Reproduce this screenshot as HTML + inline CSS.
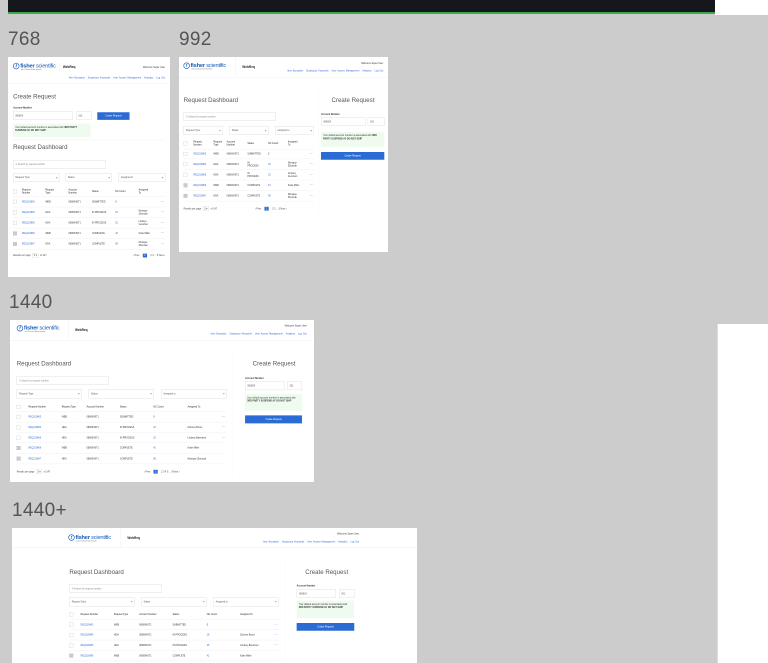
<!DOCTYPE html>
<html><head><meta charset="utf-8">
<style>
*{margin:0;padding:0;box-sizing:border-box}
body{width:768px;height:663px;background:#cccccc;position:relative;overflow:hidden;font-family:"Liberation Sans",sans-serif}
.lbl{position:absolute;font-size:19px;color:#555;letter-spacing:.3px}
.b{position:absolute;background:#fff;overflow:hidden}
.in{position:absolute;left:0;top:0;transform-origin:0 0;transform:scale(.211);font-size:11px;color:#333}
.a{position:absolute;white-space:nowrap}
.logo{position:absolute;height:40px;width:210px}
.logo .c{position:absolute;left:0;top:2px;width:30px;height:30px;border:3px solid #1a5bb8;border-radius:50%;color:#1a5bb8;font-weight:bold;font-size:20px;text-align:center;line-height:24px;font-style:italic}
.logo .t{position:absolute;left:34px;top:0;font-size:27px;color:#1a5bb8;letter-spacing:-1px}
.logo .t b{font-weight:bold}
.logo .s{position:absolute;left:38px;top:30px;font-size:7px;color:#666}
.vd{position:absolute;width:1px;background:#ddd}
.wr{font-weight:bold;font-size:15px;color:#222}
.nav{color:#2b6cd4;font-size:11px;word-spacing:2px}
.nav span{margin-left:14px}
.hr{position:absolute;left:0;right:0;height:2px;background:#eee}
.ttl{font-size:29px;color:#555;font-weight:300}
.bx{position:absolute;border:1px solid #bbb;background:#fff;font-size:11px;color:#555;padding:0 10px;display:flex;align-items:center;justify-content:space-between}
.btn{position:absolute;background:#2b6cd4;color:#fff;font-size:11px;display:flex;align-items:center;justify-content:center;border-radius:2px}
.note{position:absolute;background:#eefbee;font-size:11px;color:#333;padding:10px;line-height:15px;white-space:normal}
.row{position:absolute;display:grid;align-items:center;border-bottom:2px solid #eee;font-size:11px;line-height:14px}
.row.h{font-size:11px;color:#222}
.cb{width:18px;height:18px;border:1px solid #aaa;background:#fff}
.cb.g{background:#ccc}
.lk{color:#2b6cd4}
.dt{color:#2b6cd4;font-size:16px;letter-spacing:1px}
.pg{position:absolute;display:flex;align-items:center;gap:16px;font-size:11px;color:#444}
.pg .on{background:#2b6cd4;color:#fff;padding:3px 7px}
.sel{border:1px solid #bbb;padding:3px 6px}
</style></head><body>

<div style="position:absolute;left:8px;top:0;width:707px;height:12px;background:#16161d"></div>
<div style="position:absolute;left:8px;top:12px;width:707px;height:2px;background:#3ca94a"></div>
<div style="position:absolute;left:715px;top:0;width:53px;height:15px;background:#fff"></div>

<div class="lbl" style="left:8px;top:29px">768</div>
<div class="lbl" style="left:179px;top:29px">992</div>
<div class="lbl" style="left:9px;top:292px">1440</div>
<div class="lbl" style="left:12px;top:500px">1440+</div>

<!-- 768 -->
<div class="b" style="left:8px;top:57px;width:162px;height:220px">
<div class="in" style="width:768px;height:1043px">
 <div class="logo" style="left:24px;top:26px"><div class="c">f</div><div class="t"><b>fisher</b> scientific</div><div class="s">part of Thermo Fisher Scientific</div></div>
 <div class="vd" style="left:243px;top:30px;height:40px"></div>
 <div class="a wr" style="left:260px;top:40px">WebReq</div>
 <div class="a" style="right:24px;top:44px">Welcome Super User</div>
 <div class="a nav" style="right:24px;top:94px">Item Exception<span>Suspicious Keywords</span><span>User Access Management</span><span>Analytics</span><span>Log Out</span></div>
 <div class="hr" style="top:123px"></div>
 <div class="a ttl" style="left:24px;top:172px">Create Request</div>
 <div class="a" style="left:24px;top:234px;font-weight:bold">Account Number</div>
 <div class="bx" style="left:24px;top:259px;width:284px;height:38px">080824</div>
 <div class="bx" style="left:324px;top:259px;width:71px;height:38px">001</div>
 <div class="btn" style="left:423px;top:262px;width:153px;height:36px">Create Request</div>
 <div class="note" style="left:24px;top:316px;width:367px;height:63px">Your default account number is associated with <b>3RD PARTY SUSPEND AF DO NOT SHIP</b></div>
 <div class="hr" style="top:392px;left:24px;right:24px"></div>
 <div class="a ttl" style="left:24px;top:410px">Request Dashboard</div>
 <div class="bx" style="left:24px;top:489px;width:439px;height:41px;justify-content:flex-start;color:#888">⚲ Search by request number</div>
 <div class="bx" style="left:24px;top:551px;width:221px;height:40px">Request Type <span>▾</span></div>
 <div class="bx" style="left:273px;top:551px;width:220px;height:40px">Status <span>▾</span></div>
 <div class="bx" style="left:524px;top:551px;width:221px;height:40px">Assigned to <span>▾</span></div>
 <div style="position:absolute;left:24px;top:614px;width:721px;--g:42px 111px 110px 111px 110px 111px 104px 1fr">
  <div class="row h" style="position:relative;grid-template-columns:var(--g);height:48px"><div class="cb"></div><div>Request<br>Number</div><div>Request<br>Type</div><div>Account<br>Number</div><div>Status</div><div>NC Count</div><div>Assigned<br>To</div><div></div></div>
  <div class="row" style="position:relative;grid-template-columns:var(--g);height:50px"><div class="cb"></div><div class="lk">REQ219863</div><div>WEB</div><div>0808S4ST1</div><div>SUBMITTED</div><div>0</div><div></div><div class="dt">···</div></div>
  <div class="row" style="position:relative;grid-template-columns:var(--g);height:50px"><div class="cb"></div><div class="lk">REQ219864</div><div>HDA</div><div>0808S4ST1</div><div>IN PROCESS</div><div class="lk">18</div><div>Monique<br>Zboncak</div><div class="dt">···</div></div>
  <div class="row" style="position:relative;grid-template-columns:var(--g);height:50px"><div class="cb"></div><div class="lk">REQ219865</div><div>HDA</div><div>0808S4ST1</div><div>IN PROCESS</div><div class="lk">25</div><div>Lindsey<br>Gocohen</div><div class="dt">···</div></div>
  <div class="row" style="position:relative;grid-template-columns:var(--g);height:50px"><div class="cb g"></div><div class="lk">REQ219866</div><div>WEB</div><div>0808S4ST1</div><div>COMPLETE</div><div class="lk">42</div><div>Katie Miller</div><div class="dt">···</div></div>
  <div class="row" style="position:relative;grid-template-columns:var(--g);height:50px"><div class="cb g"></div><div class="lk">REQ219867</div><div>HDA</div><div>0808S4ST1</div><div>COMPLETE</div><div class="lk">58</div><div>Monique<br>Zboncak</div><div class="dt">···</div></div>
 </div>
 <div class="pg" style="left:24px;top:930px;gap:8px">Results per page <span class="sel">5 ▾</span> of 147</div>
 <div class="pg" style="right:24px;top:932px">‹ Prev <span class="on">1</span>2 3 ... 5 Next ›</div>
</div></div>

<!-- 992 -->
<div class="b" style="left:179px;top:57px;width:209px;height:195px">
<div class="in" style="width:992px;height:924px">
 <div class="logo" style="left:21px;top:24px"><div class="c">f</div><div class="t"><b>fisher</b> scientific</div><div class="s">part of Thermo Fisher Scientific</div></div>
 <div class="vd" style="left:268px;top:0;height:95px"></div>
 <div class="a wr" style="left:300px;top:40px">WebReq</div>
 <div class="a" style="right:24px;top:24px">Welcome Super User</div>
 <div class="a nav" style="right:24px;top:60px">Item Exception<span>Suspicious Keywords</span><span>User Access Management</span><span>Analytics</span><span>Log Out</span></div>
 <div class="hr" style="top:95px"></div>
 <div class="a ttl" style="left:22px;top:188px">Request Dashboard</div>
 <div class="bx" style="left:22px;top:264px;width:437px;height:38px;justify-content:flex-start;color:#888">⚲ Search by request number</div>
 <div class="bx" style="left:22px;top:328px;width:185px;height:40px">Request Type <span>▾</span></div>
 <div class="bx" style="left:239px;top:328px;width:186px;height:40px">Status <span>▾</span></div>
 <div class="bx" style="left:455px;top:328px;width:185px;height:40px">Assigned to <span>▾</span></div>
 <div style="position:absolute;left:22px;top:382px;width:618px;--g:46px 95px 63px 98px 98px 94px 104px 1fr">
  <div class="row h" style="position:relative;grid-template-columns:var(--g);height:56px"><div class="cb"></div><div>Request<br>Number</div><div>Request<br>Type</div><div>Account<br>Number</div><div>Status</div><div>NC Count</div><div>Assigned<br>To</div><div></div></div>
  <div class="row" style="position:relative;grid-template-columns:var(--g);height:46px"><div class="cb"></div><div class="lk">REQ219863</div><div>WEB</div><div>0808S4ST1</div><div>SUBMITTED</div><div>0</div><div></div><div class="dt">···</div></div>
  <div class="row" style="position:relative;grid-template-columns:var(--g);height:50px"><div class="cb"></div><div class="lk">REQ219864</div><div>HDA</div><div>0808S4ST1</div><div>IN<br>PROCESS</div><div class="lk">18</div><div>Monique<br>Zboncak</div><div class="dt">···</div></div>
  <div class="row" style="position:relative;grid-template-columns:var(--g);height:50px"><div class="cb"></div><div class="lk">REQ219865</div><div>HDA</div><div>0808S4ST1</div><div>IN<br>PROCESS</div><div class="lk">25</div><div>Lindsey<br>Gocohen</div><div class="dt">···</div></div>
  <div class="row" style="position:relative;grid-template-columns:var(--g);height:50px"><div class="cb g"></div><div class="lk">REQ219866</div><div>WEB</div><div>0808S4ST1</div><div>COMPLETE</div><div class="lk">42</div><div>Katie Miller</div><div class="dt">···</div></div>
  <div class="row" style="position:relative;grid-template-columns:var(--g);height:50px"><div class="cb g"></div><div class="lk">REQ219867</div><div>HDA</div><div>0808S4ST1</div><div>COMPLETE</div><div class="lk">58</div><div>Monique<br>Zboncak</div><div class="dt">···</div></div>
 </div>
 <div class="pg" style="left:22px;top:708px;gap:8px">Results per page <span class="sel">5 ▾</span> of 147</div>
 <div class="pg" style="left:360px;top:710px">‹ Prev <span class="on">1</span>2 3 ... 5 Next ›</div>
 <div class="vd" style="left:660px;top:142px;height:616px;background:#eee"></div>
 <div class="a ttl" style="left:723px;top:188px">Create Request</div>
 <div class="a" style="left:673px;top:266px;font-weight:bold">Account Number</div>
 <div class="bx" style="left:673px;top:288px;width:211px;height:39px">080824</div>
 <div class="bx" style="left:895px;top:288px;width:78px;height:39px">001</div>
 <div class="note" style="left:673px;top:355px;width:300px;height:71px">Your default account number is associated with <b>3RD PARTY SUSPEND AF DO NOT SHIP</b></div>
 <div class="btn" style="left:673px;top:450px;width:300px;height:37px">Create Request</div>
</div></div>

<!-- 1440 -->
<div class="b" style="left:10px;top:320px;width:304px;height:162px">
<div class="in" style="width:1440px;height:768px">
 <div class="logo" style="left:32px;top:22px"><div class="c">f</div><div class="t"><b>fisher</b> scientific</div><div class="s">part of Thermo Fisher Scientific</div></div>
 <div class="vd" style="left:276px;top:0;height:95px"></div>
 <div class="a wr" style="left:308px;top:40px">WebReq</div>
 <div class="a" style="right:34px;top:22px">Welcome Super User</div>
 <div class="a nav" style="right:34px;top:60px">Item Exception<span>Suspicious Keywords</span><span>User Access Management</span><span>Analytics</span><span>Log Out</span></div>
 <div class="hr" style="top:95px"></div>
 <div class="a ttl" style="left:32px;top:191px">Request Dashboard</div>
 <div class="bx" style="left:32px;top:267px;width:437px;height:41px;justify-content:flex-start;color:#888">⚲ Search by request number</div>
 <div class="bx" style="left:32px;top:330px;width:308px;height:41px">Request Type <span>▾</span></div>
 <div class="bx" style="left:373px;top:330px;width:309px;height:41px">Status <span>▾</span></div>
 <div class="bx" style="left:716px;top:330px;width:311px;height:41px">Assigned to <span>▾</span></div>
 <div style="position:absolute;left:32px;top:390px;width:995px;--g:55px 158px 118px 158px 158px 163px 161px 1fr">
  <div class="row h" style="position:relative;grid-template-columns:var(--g);height:46px"><div class="cb"></div><div>Request Number</div><div>Request Type</div><div>Account Number</div><div>Status</div><div>NC Count</div><div>Assigned To</div><div></div></div>
  <div class="row" style="position:relative;grid-template-columns:var(--g);height:49px"><div class="cb"></div><div class="lk">REQ219863</div><div>WEB</div><div>0808S4ST1</div><div>SUBMITTED</div><div>0</div><div></div><div class="dt">···</div></div>
  <div class="row" style="position:relative;grid-template-columns:var(--g);height:49px"><div class="cb"></div><div class="lk">REQ219864</div><div>HDA</div><div>0808S4ST1</div><div>IN PROCESS</div><div class="lk">18</div><div>Dolores Bruce</div><div class="dt">···</div></div>
  <div class="row" style="position:relative;grid-template-columns:var(--g);height:49px"><div class="cb"></div><div class="lk">REQ219865</div><div>HDA</div><div>0808S4ST1</div><div>IN PROCESS</div><div class="lk">25</div><div>Lindsey Baentsen</div><div class="dt">···</div></div>
  <div class="row" style="position:relative;grid-template-columns:var(--g);height:50px"><div class="cb g"></div><div class="lk">REQ219866</div><div>WEB</div><div>0808S4ST1</div><div>COMPLETE</div><div class="lk">42</div><div>Katie Miller</div><div></div></div>
  <div class="row" style="position:relative;grid-template-columns:var(--g);height:50px"><div class="cb g"></div><div class="lk">REQ219867</div><div>HDA</div><div>0808S4ST1</div><div>COMPLETE</div><div class="lk">58</div><div>Monique Zboncak</div><div></div></div>
 </div>
 <div class="pg" style="left:32px;top:708px;gap:8px">Results per page <span class="sel">5 ▾</span> of 147</div>
 <div class="pg" style="left:635px;top:710px">‹ Prev <span class="on">1</span>2 3 4 5 ... 9 Next ›</div>
 <div class="vd" style="left:1054px;top:145px;height:601px;background:#eee"></div>
 <div class="a ttl" style="left:1150px;top:191px">Create Request</div>
 <div class="a" style="left:1114px;top:271px;font-weight:bold">Account Number</div>
 <div class="bx" style="left:1114px;top:291px;width:186px;height:41px">080824</div>
 <div class="bx" style="left:1314px;top:291px;width:70px;height:41px">001</div>
 <div class="note" style="left:1114px;top:351px;width:270px;height:79px">Your default account number is associated with <b>3RD PARTY SUSPEND AF DO NOT SHIP</b></div>
 <div class="btn" style="left:1114px;top:452px;width:270px;height:38px">Create Request</div>
</div></div>

<!-- 1440+ -->
<div class="b" style="left:12px;top:528px;width:405px;height:135px">
<div class="in" style="width:1920px;height:640px">
 <div class="logo" style="left:267px;top:28px"><div class="c">f</div><div class="t"><b>fisher</b> scientific</div><div class="s">part of Thermo Fisher Scientific</div></div>
 <div class="vd" style="left:515px;top:0;height:93px"></div>
 <div class="a wr" style="left:547px;top:40px">WebReq</div>
 <div class="a" style="right:275px;top:22px">Welcome Super User</div>
 <div class="a nav" style="right:275px;top:60px">Item Exception<span>Suspicious Keywords</span><span>User Access Management</span><span>Analytics</span><span>Log Out</span></div>
 <div class="hr" style="top:93px"></div>
 <div class="a ttl" style="left:272px;top:192px">Request Dashboard</div>
 <div class="bx" style="left:272px;top:266px;width:437px;height:42px;justify-content:flex-start;color:#888">⚲ Search by request number</div>
 <div class="bx" style="left:272px;top:330px;width:309px;height:41px">Request Type <span>▾</span></div>
 <div class="bx" style="left:613px;top:330px;width:310px;height:41px">Status <span>▾</span></div>
 <div class="bx" style="left:954px;top:330px;width:310px;height:41px">Assigned to <span>▾</span></div>
 <div style="position:absolute;left:272px;top:388px;width:992px;--g:53px 158px 120px 158px 162px 158px 162px 1fr">
  <div class="row h" style="position:relative;grid-template-columns:var(--g);height:46px"><div class="cb"></div><div>Request Number</div><div>Request Type</div><div>Account Number</div><div>Status</div><div>NC Count</div><div>Assigned To</div><div></div></div>
  <div class="row" style="position:relative;grid-template-columns:var(--g);height:49px"><div class="cb"></div><div class="lk">REQ219863</div><div>WEB</div><div>0808S4ST1</div><div>SUBMITTED</div><div>0</div><div></div><div class="dt">···</div></div>
  <div class="row" style="position:relative;grid-template-columns:var(--g);height:49px"><div class="cb"></div><div class="lk">REQ219864</div><div>HDA</div><div>0808S4ST1</div><div>IN PROCESS</div><div class="lk">18</div><div>Dolores Bruce</div><div class="dt">···</div></div>
  <div class="row" style="position:relative;grid-template-columns:var(--g);height:49px"><div class="cb"></div><div class="lk">REQ219865</div><div>HDA</div><div>0808S4ST1</div><div>IN PROCESS</div><div class="lk">25</div><div>Lindsey Baentsen</div><div class="dt">···</div></div>
  <div class="row" style="position:relative;grid-template-columns:var(--g);height:50px"><div class="cb g"></div><div class="lk">REQ219866</div><div>WEB</div><div>0808S4ST1</div><div>COMPLETE</div><div class="lk">42</div><div>Katie Miller</div><div></div></div>
 </div>
 <div class="vd" style="left:1297px;top:145px;height:500px;background:#eee"></div>
 <div class="a ttl" style="left:1390px;top:192px">Create Request</div>
 <div class="a" style="left:1349px;top:268px;font-weight:bold">Account Number</div>
 <div class="bx" style="left:1349px;top:292px;width:186px;height:38px">080824</div>
 <div class="bx" style="left:1550px;top:292px;width:72px;height:38px">001</div>
 <div class="note" style="left:1349px;top:345px;width:273px;height:82px">Your default account number is associated with <b>3RD PARTY SUSPEND AF DO NOT SHIP</b></div>
 <div class="btn" style="left:1349px;top:450px;width:273px;height:37px">Create Request</div>
</div></div>

<div style="position:absolute;left:717px;top:324px;width:51px;height:339px;background:#fff;border-left:1px solid #ddd"></div>
</body></html>
